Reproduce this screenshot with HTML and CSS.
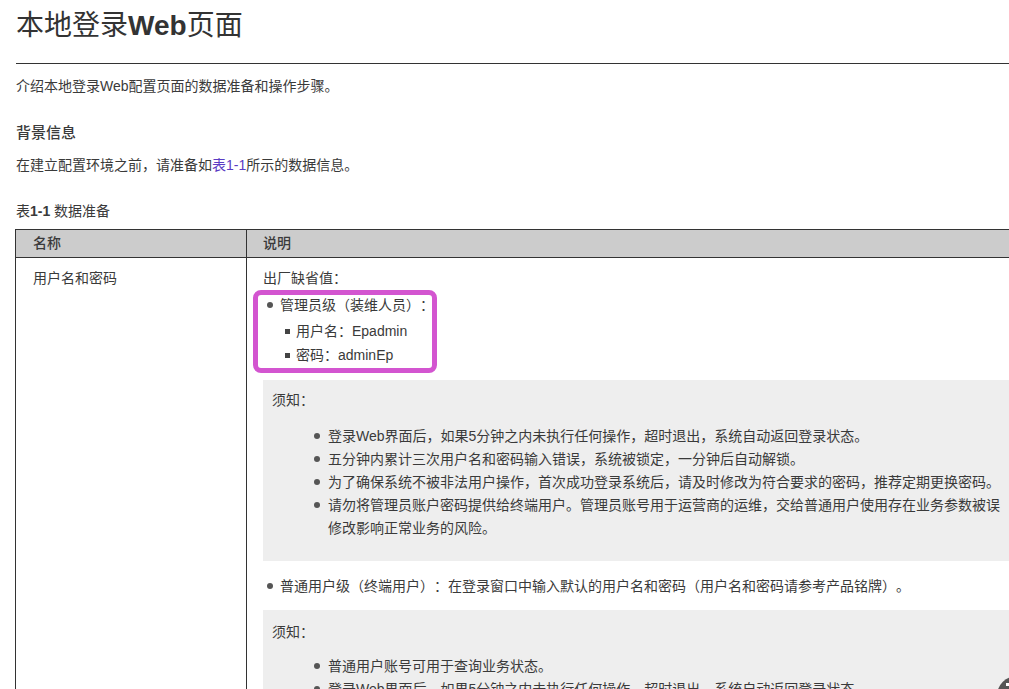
FILE: index.html
```html
<!DOCTYPE html>
<html lang="zh-CN">
<head>
<meta charset="utf-8">
<title>本地登录Web页面</title>
<link rel="stylesheet" href="styles.css">
</head>
<body>
<main class="page">
  <h1 class="title">本地登录<b>Web</b>页面</h1>
  <p class="intro">介绍本地登录Web配置页面的数据准备和操作步骤。</p>
  <h2 class="section">背景信息</h2>
  <p class="para">在建立配置环境之前，请准备如<a class="link" href="#t">表1-1</a>所示的数据信息。</p>
  <p class="caption" id="t">表<b>1-1</b> 数据准备</p>
  <table class="data">
    <colgroup><col class="c1"><col class="c2"></colgroup>
    <thead>
      <tr><th class="first">名称</th><th>说明</th></tr>
    </thead>
    <tbody>
      <tr>
        <td class="first">用户名和密码</td>
        <td>
          <p class="cell-lead">出厂缺省值：</p>
          <div class="highlighted">
            <span class="marker"></span>
            <ul class="list">
              <li>管理员级（装维人员）：
                <ul class="sublist">
                  <li>用户名：Epadmin</li>
                  <li>密码：adminEp</li>
                </ul>
              </li>
            </ul>
          </div>
          <div class="note">
            <p class="note-title">须知：</p>
            <ul class="note-list">
              <li>登录Web界面后，如果5分钟之内未执行任何操作，超时退出，系统自动返回登录状态。</li>
              <li>五分钟内累计三次用户名和密码输入错误，系统被锁定，一分钟后自动解锁。</li>
              <li>为了确保系统不被非法用户操作，首次成功登录系统后，请及时修改为符合要求的密码，推荐定期更换密码。</li>
              <li class="wrap">请勿将管理员账户密码提供给终端用户。管理员账号用于运营商的运维，交给普通用户使用存在业务参数被误修改影响正常业务的风险。</li>
            </ul>
          </div>
          <ul class="list second">
            <li>普通用户级（终端用户）：在登录窗口中输入默认的用户名和密码（用户名和密码请参考产品铭牌）。</li>
          </ul>
          <div class="note">
            <p class="note-title">须知：</p>
            <ul class="note-list">
              <li>普通用户账号可用于查询业务状态。</li>
              <li>登录Web界面后，如果5分钟之内未执行任何操作，超时退出，系统自动返回登录状态。</li>
            </ul>
          </div>
        </td>
      </tr>
    </tbody>
  </table>
</main>
<button class="float" type="button" aria-label="反馈"><span class="float-glyph"></span></button>
</body>
</html>
```
FILE: styles.css
```css
html, body { margin: 0; height: 689px; overflow: hidden; background: #fff; }
body { font-family: "Liberation Sans", "Noto Sans CJK SC", sans-serif; font-size: 14px; color: #3a3a3a; line-height: 23px; text-spacing-trim: space-all; }
.page { padding-left: 16px; }
.title { margin: 0; padding: 6px 0 18px; height: 39px; line-height: 39px; font-size: 28px; font-weight: 400; color: #333; border-bottom: 1px solid #333; box-sizing: content-box; }
.title b { font-weight: 700; }
.intro { margin: 11px 0 0; }
.section { margin: 23px 0 0; font-size: 15px; line-height: 23px; font-weight: 500; }
.para { margin: 10px 0 0; }
.link { color: #5b3cc4; text-decoration: none; }
.caption { margin: 23px 0 0; }
.caption b { font-weight: 700; }
.data { margin: 6px 0 0 -1px; border-collapse: collapse; table-layout: fixed; width: 1100px; }
.c1 { width: 231px; }
.data th, .data td { border: 1px solid #333; padding: 0 16px; text-align: left; vertical-align: top; }
.data .first { padding-left: 17px; }
.data th { background: #ccc; font-weight: 500; height: 27px; line-height: 27px; padding-top: 0; padding-bottom: 0; }
.data td { padding-top: 9px; }
.cell-lead { margin: 0; }
.highlighted { position: relative; }
.marker { position: absolute; left: -10px; top: -4px; width: 174px; height: 73px; border: 5px solid #d355d0; border-radius: 8px; }
.list, .sublist, .note-list { margin: 0; padding: 0; list-style: none; }
.list { margin-top: 4px; }
.list > li, .sublist > li, .note-list > li { position: relative; }
.list > li { padding-left: 17px; }
.list > li::before, .note-list > li::before { content: ""; position: absolute; width: 6px; height: 6px; border-radius: 50%; background: #555; top: 8px; }
.list > li::before { left: 4px; }
.sublist { margin-top: 3px; }
.sublist > li { padding-left: 16px; margin-bottom: 1px; }
.sublist > li::before { content: ""; position: absolute; left: 5px; top: 9px; width: 5px; height: 5px; background: #444; }
.note { margin-top: 13px; background: #eee; padding: 9px 9px 21px; }
.note-title { margin: 0; }
.note-list { margin-top: 13px; padding-left: 56px; width: 680px; }
.note-list > li::before { left: -14px; }
.second { margin-top: 14px; }
.second + .note { margin-top: 12px; padding-top: 11px; }
.second + .note .note-list { margin-top: 11px; }
.float { position: fixed; left: 997px; top: 676px; width: 40px; height: 40px; padding: 0; border: 0; border-radius: 50%; background: #555; }
.float-glyph { position: absolute; left: 9px; top: 7px; width: 6px; height: 3px; background: #fff; }
```
